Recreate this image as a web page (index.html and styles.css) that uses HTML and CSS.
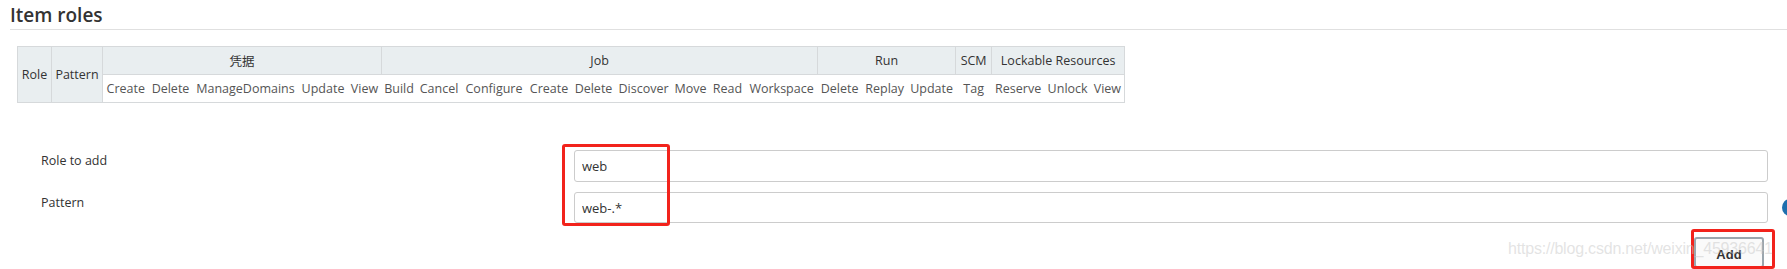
FILE: index.html
```html
<!DOCTYPE html>
<html lang="en">
<head>
<meta charset="utf-8">
<title>Item roles</title>
<link rel="stylesheet" href="styles.css">
</head>
<body>
<div class="page">
  <h2 class="section-title">Item roles</h2>
  <table class="roles">
    <colgroup>
      <col><col><col><col><col><col><col><col><col><col><col><col><col><col><col><col><col><col><col><col><col><col><col>
    </colgroup>
    <thead>
      <tr class="group-row">
        <th rowspan="2" class="fixed">Role</th>
        <th rowspan="2" class="fixed">Pattern</th>
        <th colspan="5">凭据</th>
        <th colspan="9">Job</th>
        <th colspan="3">Run</th>
        <th>SCM</th>
        <th colspan="3">Lockable Resources</th>
      </tr>
      <tr class="perm-row">
        <th>Create</th><th>Delete</th><th>ManageDomains</th><th>Update</th><th>View</th>
        <th>Build</th><th>Cancel</th><th>Configure</th><th>Create</th><th>Delete</th><th>Discover</th><th>Move</th><th>Read</th><th>Workspace</th>
        <th>Delete</th><th>Replay</th><th>Update</th>
        <th>Tag</th>
        <th>Reserve</th><th>Unlock</th><th class="last">View</th>
      </tr>
    </thead>
  </table>

  <div class="add-form">
    <label class="field-label" for="role">Role to add</label>
    <input class="text-input" id="role" type="text" value="web">
    <span class="help-slot"></span>

    <label class="field-label" for="pattern">Pattern</label>
    <input class="text-input" id="pattern" type="text" value="web-.*">
    <span class="help-slot"><span class="help-icon">?</span></span>

    <span class="field-label"></span>
    <div class="button-cell"><button class="add-button" type="button">Add</button></div>
    <span class="help-slot"></span>
  </div>

  <div class="annot annot-inputs"></div>
  <div class="annot annot-button"></div>
  <div class="watermark">https://blog.csdn.net/weixin_45936641</div>
</div>
</body>
</html>
```

FILE: styles.css
```css
html, body {
  margin: 0;
  padding: 0;
  overflow: hidden;
  background: #fff;
}

body {
  font-family: "Open Sans", "Noto Sans CJK SC", sans-serif;
  color: #333;
  font-size: 13px;
}

.page {
  position: relative;
  padding-left: 10px;
  width: 1777px;
  height: 269px;
}

.section-title {
  margin: 0;
  padding-top: 1px;
  font-size: 19px;
  font-weight: 600;
  line-height: 28px;
  color: #333;
  border-bottom: 1px solid #e0e0e0;
}

.roles {
  margin: 16px 0 0 7px;
  width: 1107px;
  table-layout: fixed;
  border-collapse: collapse;
  font-size: 12.5px;
}

.roles col:nth-child(1) { width: 34px; }
.roles col:nth-child(2) { width: 51px; }
.roles col:nth-child(3) { width: 46px; }
.roles col:nth-child(4) { width: 44px; }
.roles col:nth-child(5) { width: 106px; }
.roles col:nth-child(6) { width: 49px; }
.roles col:nth-child(7) { width: 34px; }
.roles col:nth-child(8) { width: 35px; }
.roles col:nth-child(9) { width: 45px; }
.roles col:nth-child(10) { width: 65px; }
.roles col:nth-child(11) { width: 45px; }
.roles col:nth-child(12) { width: 44px; }
.roles col:nth-child(13) { width: 56px; }
.roles col:nth-child(14) { width: 38px; }
.roles col:nth-child(15) { width: 36px; }
.roles col:nth-child(16) { width: 72px; }
.roles col:nth-child(17) { width: 44px; }
.roles col:nth-child(18) { width: 46px; }
.roles col:nth-child(19) { width: 48px; }
.roles col:nth-child(20) { width: 36px; }
.roles col:nth-child(21) { width: 53px; }
.roles col:nth-child(22) { width: 46px; }
.roles col:nth-child(23) { width: 34px; }

.roles th {
  padding: 0;
  border: 1px solid #d6d9db;
  font-weight: normal;
  text-align: center;
  white-space: nowrap;
  overflow: visible;
}

.group-row th {
  height: 27px;
  background: #e9eef0;
  color: #333;
}

.perm-row th {
  height: 27px;
  background: #fff;
  color: #555;
  border-left: none;
  border-right: none;
}

.perm-row th.last {
  border-right: 1px solid #d6d9db;
}

.add-form {
  display: grid;
  grid-template-columns: 533px 1194px 30px;
  grid-auto-rows: auto;
  row-gap: 10px;
  margin: 47px 0 0 31px;
}

.field-label {
  font-size: 12.5px;
  line-height: 20px;
  padding-top: 1px;
  color: #333;
}

.text-input {
  box-sizing: border-box;
  height: 32px;
  width: 1194px;
  margin: 0;
  padding: 0 7px;
  border: 1px solid #ccc;
  border-radius: 3px;
  font-family: "Open Sans", sans-serif;
  font-size: 13px;
  color: #333;
  background: #fff;
}

#pattern {
  height: 31px;
}

.help-slot {
  display: flex;
  align-items: center;
  padding-left: 14px;
}

.help-icon {
  display: inline-flex;
  align-items: center;
  justify-content: center;
  width: 17px;
  height: 17px;
  border-radius: 50%;
  background: #1f6fae;
  color: #fff;
  font-size: 11px;
  font-weight: 700;
}

.button-cell {
  display: flex;
  justify-content: flex-end;
  padding-right: 4px;
  margin-top: 4px;
}

.add-button {
  box-sizing: border-box;
  width: 70px;
  height: 31px;
  border: 2px solid #9ba6ae;
  border-radius: 3px;
  background: #fafafa;
  font-family: "Liberation Sans", sans-serif;
  font-size: 13px;
  font-weight: 700;
  color: #333;
  padding: 3px 0 0;
}

.annot {
  position: absolute;
  border: 3px solid #f2231c;
  border-radius: 3px;
  box-sizing: border-box;
}

.annot-inputs {
  left: 562px;
  top: 144px;
  width: 108px;
  height: 82px;
}

.annot-button {
  left: 1691px;
  top: 229px;
  width: 84px;
  height: 40px;
}

.watermark {
  position: absolute;
  left: 1508px;
  top: 240px;
  font-family: "Liberation Sans", sans-serif;
  font-size: 16px;
  letter-spacing: -0.2px;
  color: rgba(200, 200, 200, 0.5);
  white-space: nowrap;
  pointer-events: none;
}
```
